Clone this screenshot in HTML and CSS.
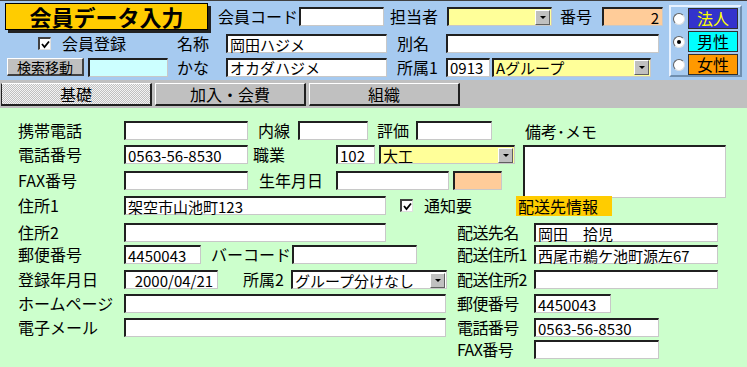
FILE: index.html
```html
<!DOCTYPE html>
<html lang="ja">
<head>
    <meta charset="UTF-8">
    <title>会員データ入力</title>
    <link rel="stylesheet" href="styles.css">
</head>
<body>
    <div class="form">
        <div class="header">
            <div class="header-rows">
                <div class="row row1">
                    <div class="title">会員データ入力</div>
                    <span class="lbl ml10 w81">会員コード</span>
                    <span class="box w85"></span>
                    <span class="lbl ml6 w57">担当者</span>
                    <span class="box combo yellow w105"><span class="val"></span><span class="drop"></span></span>
                    <span class="lbl ml8 w42">番号</span>
                    <span class="box orange num w61">2</span>
                </div>
                <div class="row row2">
                    <span class="check ml38"><svg viewBox="0 0 9 9" width="9" height="9"><path d="M1 4 L3.5 7 L8 1.5" fill="none" stroke="#000" stroke-width="1.8"/></svg></span>
                    <span class="lbl ml11 w115">会員登録</span>
                    <span class="lbl w49">名称</span>
                    <span class="box w161">岡田ハジメ</span>
                    <span class="lbl ml10 w49">別名</span>
                    <span class="box w213"></span>
                </div>
                <div class="row row3">
                    <button class="btn ml7">検索移動</button>
                    <span class="box cyan ml4 w80"></span>
                    <span class="lbl ml9 w49">かな</span>
                    <span class="box w161">オカダハジメ</span>
                    <span class="lbl ml10 w49">所属1</span>
                    <span class="box w44">0913</span>
                    <span class="box combo yellow ml2 w159"><span class="val">Aグループ</span><span class="drop"></span></span>
                </div>
            </div>
            <div class="gender">
                <div class="opt"><span class="radio"></span><span class="tag corp">法人</span></div>
                <div class="opt"><span class="radio on"></span><span class="tag male">男性</span></div>
                <div class="opt"><span class="radio"></span><span class="tag female">女性</span></div>
            </div>
        </div>

        <div class="tabs">
            <div class="tab active">基礎</div>
            <div class="tab">加入・会費</div>
            <div class="tab">組織</div>
        </div>

        <div class="main">
            <div class="cell left wide">
                <span class="lbl w106">携帯電話</span>
                <span class="box w124"></span>
                <span class="lbl ml10 w40">内線</span>
                <span class="box w70"></span>
                <span class="lbl ml9 w39">評価</span>
                <span class="box w76"></span>
            </div>
            <div class="cell memo-label">備考･メモ</div>

            <div class="cell left wide">
                <span class="lbl w106">電話番号</span>
                <span class="box w124">0563-56-8530</span>
                <span class="lbl ml5 w83">職業</span>
                <span class="box w39">102</span>
                <span class="box combo yellow ml4 w136"><span class="val">大工</span><span class="drop"></span></span>
            </div>
            <div class="memo"></div>

            <div class="cell left wide">
                <span class="lbl w106">FAX番号</span>
                <span class="box w124"></span>
                <span class="lbl ml11 w77">生年月日</span>
                <span class="box w113"></span>
                <span class="box orange ml4 w49"></span>
            </div>

            <div class="cell left wide">
                <span class="lbl w106">住所1</span>
                <span class="box w262">架空市山池町123</span>
                <span class="check ml14"><svg viewBox="0 0 9 9" width="9" height="9"><path d="M1 4 L3.5 7 L8 1.5" fill="none" stroke="#000" stroke-width="1.8"/></svg></span>
                <span class="lbl ml11">通知要</span>
            </div>
            <div class="cell ship-title"><span>配送先情報</span></div>

            <div class="cell left">
                <span class="lbl w106">住所2</span>
                <span class="box w262"></span>
            </div>
            <div class="cell right">
                <span class="lbl w77">配送先名</span>
                <span class="box w184">岡田　拾児</span>
            </div>

            <div class="cell left">
                <span class="lbl w106">郵便番号</span>
                <span class="box w77">4450043</span>
                <span class="lbl ml10 w81">バーコード</span>
                <span class="box w125"></span>
            </div>
            <div class="cell right">
                <span class="lbl w77">配送住所1</span>
                <span class="box w184">西尾市鵜ケ池町源左67</span>
            </div>

            <div class="cell left">
                <span class="lbl w106">登録年月日</span>
                <span class="box w94">&nbsp;&nbsp;2000/04/21</span>
                <span class="lbl ml25 w48">所属2</span>
                <span class="box combo w156"><span class="val">グループ分けなし</span><span class="drop"></span></span>
            </div>
            <div class="cell right">
                <span class="lbl w77">配送住所2</span>
                <span class="box w184"></span>
            </div>

            <div class="cell left">
                <span class="lbl w106">ホームページ</span>
                <span class="box w322"></span>
            </div>
            <div class="cell right">
                <span class="lbl w77">郵便番号</span>
                <span class="box w77">4450043</span>
            </div>

            <div class="cell left">
                <span class="lbl w106">電子メール</span>
                <span class="box w322"></span>
            </div>
            <div class="cell right">
                <span class="lbl w77">電話番号</span>
                <span class="box w125">0563-56-8530</span>
            </div>

            <div class="cell right">
                <span class="lbl w77">FAX番号</span>
                <span class="box w125"></span>
            </div>
        </div>
    </div>
</body>
</html>
```

FILE: styles.css
```css
:root {
    --head-bg: #a6caf0;
    --body-bg: #ccffcc;
    --face: #c0c0c0;
    --yellow: #ffff99;
    --orange: #ffcc99;
}

* {
    margin: 0;
    padding: 0;
    box-sizing: border-box;
}

body {
    font-family: "Noto Sans CJK JP", "Noto Sans", sans-serif;
    font-size: 16px;
    color: #000;
    width: 747px;
    height: 367px;
    overflow: hidden;
    background-color: var(--body-bg);
}

/* header */
.header {
    display: flex;
    height: 80px;
    background-color: var(--head-bg);
    border-top: 1px solid #404040;
}

.header-rows {
    width: 669px;
    display: flex;
    flex-direction: column;
    padding-top: 2px;
}

.row {
    display: flex;
    align-items: center;
}

.row1 { height: 27px; }
.row2 { height: 21px; margin-top: 3px; }
.row3 { height: 22px; margin-top: 2px; }

.title {
    flex: none;
    margin-left: 5px;
    width: 203px;
    height: 27px;
    background-color: #ffcc00;
    border: 1px solid #000;
    box-shadow: 3px 3px 0 #222;
    font-size: 22px;
    font-weight: bold;
    line-height: 24px;
    text-align: center;
}

.lbl {
    flex: none;
    font-size: 16px;
    line-height: 19px;
    white-space: nowrap;
}

.box {
    flex: none;
    display: flex;
    align-items: center;
    height: 19px;
    padding-left: 2px;
    background-color: #fff;
    border-style: solid;
    border-width: 2px 1px 1px 2px;
    border-color: #202020 #c8c8c8 #c8c8c8 #202020;
    font-size: 15px;
    white-space: nowrap;
}

.box.yellow { background-color: var(--yellow); }
.box.orange { background-color: var(--orange); }
.box.cyan { background-color: #ccffff; }
.box.num { justify-content: flex-end; padding-right: 3px; }

.combo .val {
    flex: 1;
}

.drop {
    flex: none;
    width: 15px;
    height: 15px;
    margin-right: 1px;
    background-color: var(--face);
    border-style: solid;
    border-width: 1px;
    border-color: #fff #606060 #606060 #fff;
    display: flex;
    align-items: center;
    justify-content: center;
}

.drop::after {
    content: "";
    border-top: 3px solid #000;
    border-left: 3px solid transparent;
    border-right: 3px solid transparent;
}

.check {
    flex: none;
    width: 13px;
    height: 13px;
    background-color: #fff;
    border-style: solid;
    border-width: 2px 1px 1px 2px;
    border-color: #404040 #e0e0e0 #e0e0e0 #404040;
    display: flex;
    align-items: center;
    justify-content: center;
}

.btn {
    flex: none;
    width: 77px;
    height: 18px;
    background-color: var(--face);
    border-style: solid;
    border-width: 1px 2px 2px 1px;
    border-color: #fff #404040 #404040 #fff;
    font-family: inherit;
    font-size: 14px;
    line-height: 14px;
    color: #000;
}

/* radio group */
.gender {
    flex: none;
    margin-top: 4px;
    width: 73px;
    height: 72px;
    border-style: solid;
    border-width: 2px;
    border-color: #e8f2ff #6f8fb0 #6f8fb0 #e8f2ff;
    padding: 1px 0 0 2px;
    display: flex;
    flex-direction: column;
    gap: 2px;
}

.opt {
    display: flex;
    align-items: center;
    height: 21px;
}

.radio {
    flex: none;
    width: 12px;
    height: 12px;
    border-radius: 50%;
    background-color: #fff;
    border-style: solid;
    border-width: 1px;
    border-color: #606060 #e0e0e0 #e0e0e0 #606060;
    display: flex;
    align-items: center;
    justify-content: center;
}

.radio.on::after {
    content: "";
    width: 4px;
    height: 4px;
    border-radius: 50%;
    background-color: #000;
}

.tag {
    margin-left: 3px;
    width: 50px;
    height: 21px;
    border: 1px solid #303030;
    font-size: 16px;
    line-height: 19px;
    text-align: center;
}

.tag.corp { background-color: #3333cc; color: #ffff00; }
.tag.male { background-color: #00ffff; }
.tag.female { background-color: #ff9900; }

/* tabs */
.tabs {
    display: flex;
    gap: 3px;
    height: 28px;
    padding: 3px 0 0 1px;
    background-color: var(--face);
}

.tab {
    width: 151px;
    height: 23px;
    background-color: var(--face);
    border-style: solid;
    border-width: 1px 2px 2px 1px;
    border-color: #fff #202020 #202020 #fff;
    font-size: 16px;
    line-height: 20px;
    text-align: center;
}

.tab.active {
    border-color: #fff #202020 #202020 #202020;
    background: repeating-conic-gradient(#c0c0c0 0 25%, #f4f4f4 0 50%) 0 0 / 2px 2px;
}

/* main grid */
.main {
    display: grid;
    grid-template-columns: 452px 64px 1fr;
    grid-template-rows: 24px 26px 25px 27px 22px 25px 24px 24px 22px 20px;
    padding-top: 13px;
}

.cell {
    display: flex;
    align-items: center;
    height: 19px;
    align-self: start;
}

.left { grid-column: 1; padding-left: 18px; }
.left.wide { grid-column: 1 / 3; }
.right { grid-column: 2 / 4; padding-left: 5px; }
.right .lbl { letter-spacing: -0.6px; }

.memo-label {
    grid-column: 3;
    padding-left: 9px;
    font-size: 16px;
}

.memo {
    grid-column: 3;
    grid-row: span 2;
    margin-left: 7px;
    width: 203px;
    height: 53px;
    background-color: #fff;
    border-style: solid;
    border-width: 2px 1px 1px 2px;
    border-color: #202020 #c8c8c8 #c8c8c8 #202020;
}

.ship-title {
    grid-column: 3;
    height: 20px;
}

.ship-title span {
    width: 96px;
    height: 20px;
    padding-left: 2px;
    background-color: #ffcc00;
    line-height: 20px;
}

/* spacing + widths */
.ml2 { margin-left: 2px; }
.ml4 { margin-left: 4px; }
.ml5 { margin-left: 5px; }
.ml6 { margin-left: 6px; }
.ml7 { margin-left: 7px; }
.ml8 { margin-left: 8px; }
.ml9 { margin-left: 9px; }
.ml10 { margin-left: 10px; }
.ml11 { margin-left: 11px; }
.ml14 { margin-left: 14px; }
.ml25 { margin-left: 25px; }
.ml38 { margin-left: 38px; }

.w39 { width: 39px; }
.w40 { width: 40px; }
.w42 { width: 42px; }
.w44 { width: 44px; }
.w48 { width: 48px; }
.w49 { width: 49px; }
.w57 { width: 57px; }
.w61 { width: 61px; }
.w70 { width: 70px; }
.w76 { width: 76px; }
.w77 { width: 77px; }
.w80 { width: 80px; }
.w81 { width: 81px; }
.w83 { width: 83px; }
.w85 { width: 85px; }
.w94 { width: 94px; }
.w105 { width: 105px; }
.w106 { width: 106px; }
.w113 { width: 113px; }
.w115 { width: 115px; }
.w124 { width: 124px; }
.w125 { width: 125px; }
.w136 { width: 136px; }
.w156 { width: 156px; }
.w159 { width: 159px; }
.w161 { width: 161px; }
.w184 { width: 184px; }
.w213 { width: 213px; }
.w262 { width: 262px; }
.w322 { width: 322px; }
```
